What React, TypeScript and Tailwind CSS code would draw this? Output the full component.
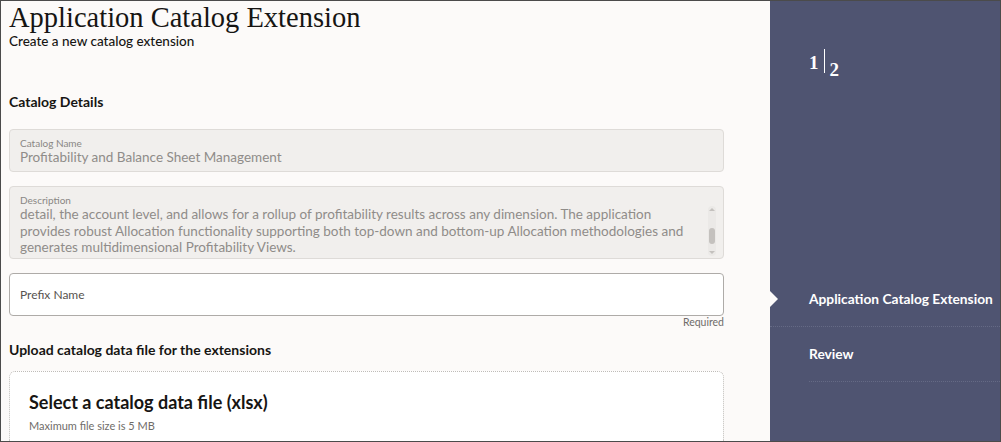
import React from "react";

const sans = "font-['Lato','Noto_Sans',sans-serif]";

function ReadOnlyField({ label, children, className = "" }: { label: string; children: React.ReactNode; className?: string }) {
  return (
    <div className={`relative rounded-[4px] border border-[#dedbd8] bg-[#f1efed] pl-[10px] pr-[24px] ${className}`}>
      <div className="text-[10px] leading-[12px] text-[#8a8784]">{label}</div>
      <div className="text-[13.5px] leading-[16.5px] text-[#8f8c89]">{children}</div>
    </div>
  );
}

export default function App() {
  return (
    <div className={`flex h-[442px] w-[1001px] overflow-hidden border border-[#4b4b4b] ${sans}`}>
      <main className="flex w-[769px] flex-col bg-[#fcfaf9] pl-[8px] pr-[46px]">
        <h1 className="mt-[2px] font-['Liberation_Serif',serif] text-[28.5px] leading-[30px] text-[#161513]">
          Application Catalog Extension
        </h1>
        <p className="text-[13.5px] font-medium leading-[16px] text-[#161513]">Create a new catalog extension</p>

        <h2 className="mt-[45px] text-[14px] font-bold leading-[16px] text-[#161513]">Catalog Details</h2>

        <ReadOnlyField label="Catalog Name" className="mt-[19px] h-[43px] pt-[7px]">
          Profitability and Balance Sheet Management
        </ReadOnlyField>

        <ReadOnlyField label="Description" className="mt-[14px] h-[73px] pt-[7px]">
          <div className="relative">
            detail, the account level, and allows for a rollup of profitability results across any dimension. The application
            provides robust Allocation functionality supporting both top-down and bottom-up Allocation methodologies and
            generates multidimensional Profitability Views.
          </div>
          <div className="absolute right-[7px] top-[19px] flex h-[50px] w-[8px] flex-col items-center justify-between rounded-sm bg-[#ebe9e7] py-[2px]">
            <span className="h-0 w-0 border-x-[3px] border-b-[3px] border-x-transparent border-b-[#c4c1be]" />
            <span className="mt-[10px] h-[16px] w-[6px] rounded-full bg-[#c4c1be]" />
            <span className="h-0 w-0 border-x-[3px] border-t-[3px] border-x-transparent border-t-[#c4c1be]" />
          </div>
        </ReadOnlyField>

        <div className="mt-[14px] flex h-[43px] items-center rounded-[4px] border border-[#aeaba8] bg-white pl-[10px]">
          <span className="text-[12px] text-[#57534f]">Prefix Name</span>
        </div>
        <div className="text-right text-[10.5px] leading-[12px] text-[#6f6c69]">Required</div>

        <h2 className="mt-[14px] text-[14px] font-bold leading-[16px] text-[#161513]">
          Upload catalog data file for the extensions
        </h2>

        <div className="mt-[13px] flex-1 rounded-t-[6px] border border-b-0 border-dotted border-[#bfbcb8] bg-white px-[19px] pt-[19px]">
          <div className="text-[18px] font-bold leading-[22px] text-[#161513]">Select a catalog data file (xlsx)</div>
          <div className="mt-[5px] text-[11px] text-[#6f6c69]">Maximum file size is 5 MB</div>
        </div>
      </main>

      <aside className="flex flex-1 flex-col bg-[#4f5471]">
        <div className="h-[271px] pl-[39px] pt-[48px]">
          <div className="flex items-start font-['Liberation_Serif',serif] text-white">
            <span className="mt-[4px] text-[19px] font-bold leading-[20px]">1</span>
            <span className="mx-[5px] h-[24px] w-px bg-white" />
            <span className="mt-[11px] text-[19px] font-bold leading-[20px]">2</span>
          </div>
        </div>

        <nav className="text-[13.75px] font-bold text-white">
          <div className="relative flex h-[55px] items-center border-b border-dotted border-[#656a85] pl-[39px]">
            <span className="absolute left-0 top-1/2 h-0 w-0 -translate-y-1/2 border-y-[8px] border-l-[8px] border-y-transparent border-l-[#fcfaf9]" />
            <span className="whitespace-nowrap">Application Catalog Extension</span>
          </div>
          <div className="ml-[39px] flex h-[55px] items-center border-b border-dotted border-[#656a85]">Review</div>
        </nav>
      </aside>
    </div>
  );
}
